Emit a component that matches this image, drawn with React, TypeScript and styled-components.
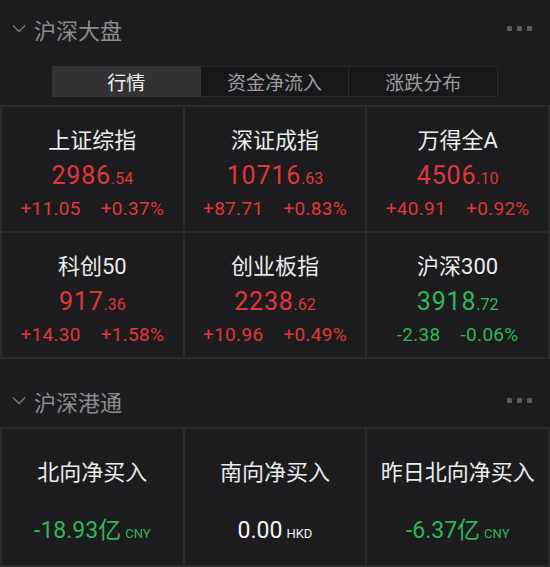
import React from "react";
import styled, { createGlobalStyle } from "styled-components";

const RED = "#e0363d";
const GREEN = "#2fb65a";
const LINE = "#2a2a2c";
const BG = "#1c1c1e";

const Global = createGlobalStyle`
  html, body { margin: 0; padding: 0; background: ${BG}; }
  body { font-family: Roboto, "Noto Sans CJK SC", sans-serif; }
`;

const Page = styled.div`
  width: 550px;
  height: 567px;
  background: ${BG};
  overflow: hidden;
  display: flex;
  flex-direction: column;
`;

const Header = styled.div<{ $top: number; $h: number }>`
  display: flex;
  align-items: center;
  height: ${(p) => p.$h}px;
  margin-top: ${(p) => p.$top}px;
  padding: 0 18px 0 12px;
  flex-shrink: 0;
`;

const Chevron = styled.svg`
  width: 14px;
  height: 9px;
  margin-right: 8px;
  flex-shrink: 0;
`;

const Title = styled.div`
  font-family: "Noto Sans CJK SC", sans-serif;
  font-size: 22px;
  line-height: 30px;
  color: #8c8c8e;
  flex: 1;
`;

const Dots = styled.div`
  display: flex;
  gap: 5px;
`;

const Dot = styled.span`
  width: 5px;
  height: 5px;
  border-radius: 1px;
  background: #5c5c5e;
`;

const Tabs = styled.div`
  display: grid;
  grid-template-columns: repeat(3, 1fr);
  margin: 9px 52px 8px 52px;
  height: 31px;
  flex-shrink: 0;
`;

const Tab = styled.div<{ $active?: boolean }>`
  display: flex;
  align-items: center;
  justify-content: center;
  font-family: "Noto Sans CJK SC", sans-serif;
  font-size: 19px;
  color: ${(p) => (p.$active ? "#f2f2f2" : "#9c9c9e")};
  background: ${(p) => (p.$active ? "#323234" : "#171719")};
  border: 1px solid ${(p) => (p.$active ? "#323234" : LINE)};
  & + & { border-left: none; }
`;

const Grid = styled.div<{ $rows: number; $h: number }>`
  display: grid;
  grid-template-columns: repeat(3, 1fr);
  grid-template-rows: repeat(${(p) => p.$rows}, ${(p) => p.$h}px);
  gap: 2px;
  padding: 2px;
  background: ${LINE};
  flex-shrink: 0;
`;

const Cell = styled.div<{ $pad: number }>`
  background: ${BG};
  display: flex;
  flex-direction: column;
  align-items: center;
  padding-top: ${(p) => p.$pad}px;
`;

const Name = styled.div`
  font-family: Roboto, "Noto Sans CJK SC", sans-serif;
  font-size: 22px;
  line-height: 28px;
  color: #ececec;
  white-space: nowrap;
`;

const Value = styled.div<{ $color: string; $mt: number; $size: number; $ls: number }>`
  font-size: ${(p) => p.$size}px;
  line-height: 34px;
  letter-spacing: ${(p) => p.$ls}px;
  margin-top: ${(p) => p.$mt}px;
  color: ${(p) => p.$color};
  white-space: nowrap;
  font-family: Roboto, "Noto Sans CJK SC", sans-serif;
`;

const Dec = styled.span`
  font-size: 16px;
  letter-spacing: 0;
`;

const Unit = styled.span`
  font-size: 13px;
  margin-left: 4px;
  letter-spacing: 0;
`;

const Changes = styled.div<{ $color: string }>`
  display: flex;
  gap: 20px;
  margin-top: 1px;
  font-size: 19px;
  line-height: 24px;
  letter-spacing: 0.3px;
  color: ${(p) => p.$color};
  white-space: nowrap;
`;

type Idx = { name: string; int: string; dec: string; chg: string; pct: string; up: boolean };

const indices: Idx[] = [
  { name: "上证综指", int: "2986", dec: ".54", chg: "+11.05", pct: "+0.37%", up: true },
  { name: "深证成指", int: "10716", dec: ".63", chg: "+87.71", pct: "+0.83%", up: true },
  { name: "万得全A", int: "4506", dec: ".10", chg: "+40.91", pct: "+0.92%", up: true },
  { name: "科创50", int: "917", dec: ".36", chg: "+14.30", pct: "+1.58%", up: true },
  { name: "创业板指", int: "2238", dec: ".62", chg: "+10.96", pct: "+0.49%", up: true },
  { name: "沪深300", int: "3918", dec: ".72", chg: "-2.38", pct: "-0.06%", up: false },
];

const flows = [
  { name: "北向净买入", value: "-18.93亿", unit: "CNY", color: GREEN },
  { name: "南向净买入", value: "0.00", unit: "HKD", color: "#f2f2f2" },
  { name: "昨日北向净买入", value: "-6.37亿", unit: "CNY", color: GREEN },
];

const SectionHeader = ({ title, top, h }: { title: string; top: number; h: number }) => (
  <Header $top={top} $h={h}>
    <Chevron viewBox="0 0 14 9">
      <path d="M1 1.5 L7 7.5 L13 1.5" fill="none" stroke="#7c7c7e" strokeWidth="1.3" />
    </Chevron>
    <Title>{title}</Title>
    <Dots>
      <Dot />
      <Dot />
      <Dot />
    </Dots>
  </Header>
);

export default function App() {
  return (
    <Page>
      <Global />
      <SectionHeader title="沪深大盘" top={0} h={57} />
      <Tabs>
        <Tab $active>行情</Tab>
        <Tab>资金净流入</Tab>
        <Tab>涨跌分布</Tab>
      </Tabs>
      <Grid $rows={2} $h={124}>
        {indices.map((i) => {
          const c = i.up ? RED : GREEN;
          return (
            <Cell key={i.name} $pad={20}>
              <Name>{i.name}</Name>
              <Value $color={c} $mt={4} $size={25} $ls={0.8}>
                {i.int}
                <Dec>{i.dec}</Dec>
              </Value>
              <Changes $color={c}>
                <span>{i.chg}</span>
                <span>{i.pct}</span>
              </Changes>
            </Cell>
          );
        })}
      </Grid>
      <SectionHeader title="沪深港通" top={15} h={53} />
      <Grid $rows={1} $h={136}>
        {flows.map((f) => (
          <Cell key={f.name} $pad={30}>
            <Name>{f.name}</Name>
            <Value $color={f.color} $mt={27} $size={23} $ls={0}>
              {f.value}
              <Unit>{f.unit}</Unit>
            </Value>
          </Cell>
        ))}
      </Grid>
    </Page>
  );
}
